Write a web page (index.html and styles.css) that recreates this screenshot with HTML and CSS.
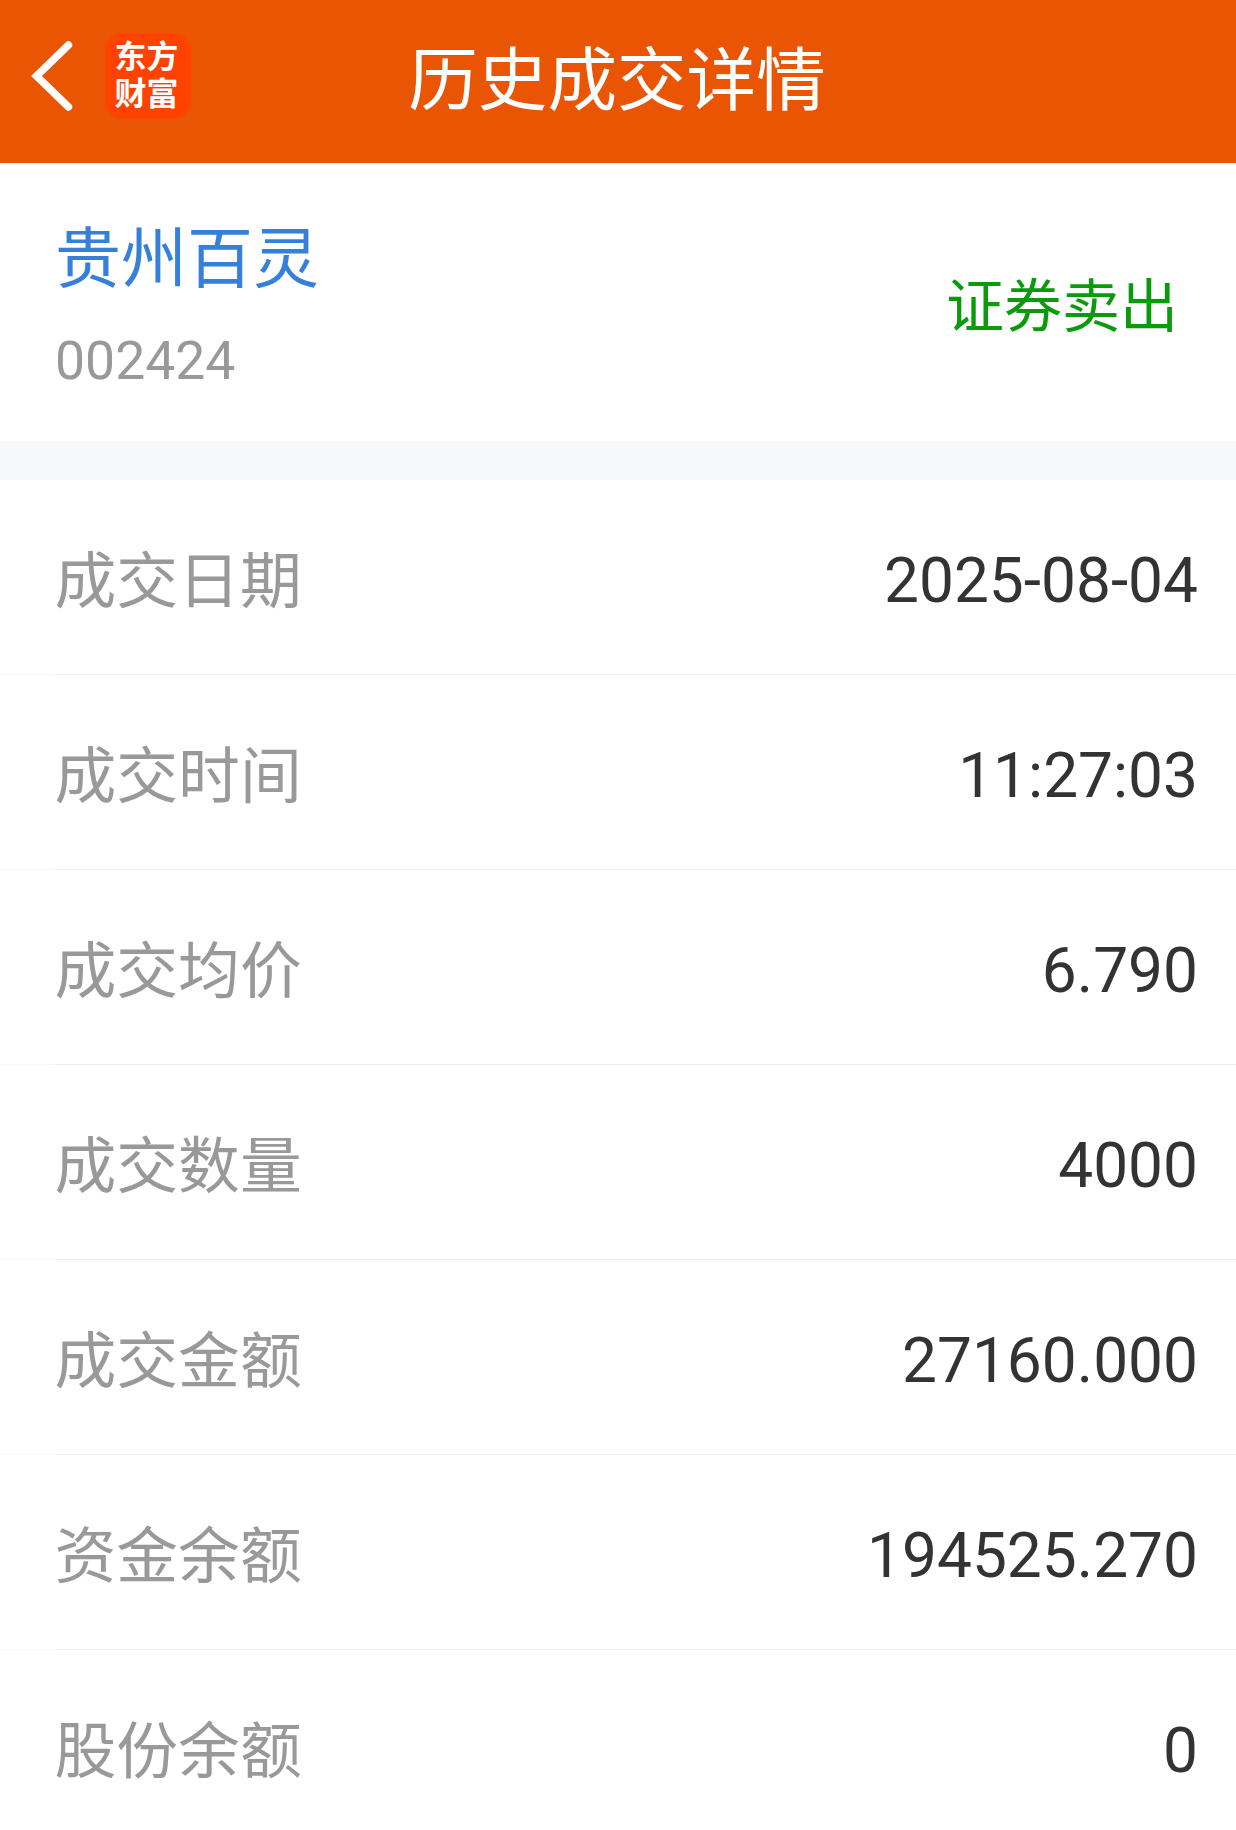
FILE: index.html
```html
<!DOCTYPE html>
<html lang="zh-CN">
<head>
<meta charset="utf-8">
<title>历史成交详情</title>
<link rel="stylesheet" href="styles.css">
</head>
<body>
<header class="bar">
  <div class="left">
    <svg class="back" viewBox="0 0 46 76" width="46" height="76"><path d="M39.5 7 L7.5 38 L39.5 69" fill="none" stroke="#fff" stroke-width="7.5" stroke-linecap="round"/></svg>
    <div class="logo"><span>东方</span><span>财富</span></div>
  </div>
  <h1 class="title">历史成交详情</h1>
</header>
<section class="stock">
  <div>
    <div class="name">贵州百灵</div>
    <div class="code">002424</div>
  </div>
  <div class="side">证券卖出</div>
</section>
<main class="list">
  <div class="row"><span class="label">成交日期</span><span class="value">2025-08-04</span></div>
  <div class="row"><span class="label">成交时间</span><span class="value">11:27:03</span></div>
  <div class="row"><span class="label">成交均价</span><span class="value">6.790</span></div>
  <div class="row"><span class="label">成交数量</span><span class="value">4000</span></div>
  <div class="row"><span class="label">成交金额</span><span class="value">27160.000</span></div>
  <div class="row"><span class="label">资金余额</span><span class="value">194525.270</span></div>
  <div class="row"><span class="label">股份余额</span><span class="value">0</span></div>
</main>
</body>
</html>
```
FILE: styles.css
```css
* { box-sizing: border-box; }
body { margin: 0; height: 1830px; overflow: hidden; background: #fff; font-family: Roboto, "Noto Sans CJK SC", sans-serif; }
.bar { height: 163px; background: #ea5504; display: grid; grid-template-columns: 1fr auto 1fr; align-items: center; padding-bottom: 2px; color: #fff; }
.left { display: flex; align-items: center; padding: 0 0 9px 29px; gap: 30px; }
.back { display: block; }
.logo { width: 86px; height: 86px; border-radius: 18px; background: #ff4200; display: flex; flex-direction: column; align-items: center; justify-content: center; padding-right: 3px; font-size: 32px; line-height: 37px; font-weight: 700; }
.title { margin: 0; padding-right: 2px; font-size: 69.6px; line-height: 100px; font-weight: 400; }
.stock { height: 317px; border-bottom: 39px solid #f6f8fa; display: flex; justify-content: space-between; align-items: center; padding: 0 58px 0 55px; }
.name { font-size: 66px; line-height: 96px; padding-top: 1px; color: #3680da; }
.code { font-size: 53.5px; line-height: 64px; margin-top: 21px; color: #999; }
.side { font-size: 58px; line-height: 80px; padding-top: 9px; color: #0a9b0a; }
.row { height: 195px; display: flex; justify-content: space-between; align-items: center; padding: 4px 38px 0 54.5px; background: linear-gradient(to right, #f8f8f8 55px, #ececec 55px) 0 100% / 100% 1px no-repeat; }
.label { font-size: 61.8px; line-height: 90px; padding-top: 5px; color: #999; }
.value { font-size: 62.2px; padding-top: 1px; color: #333; }
```
